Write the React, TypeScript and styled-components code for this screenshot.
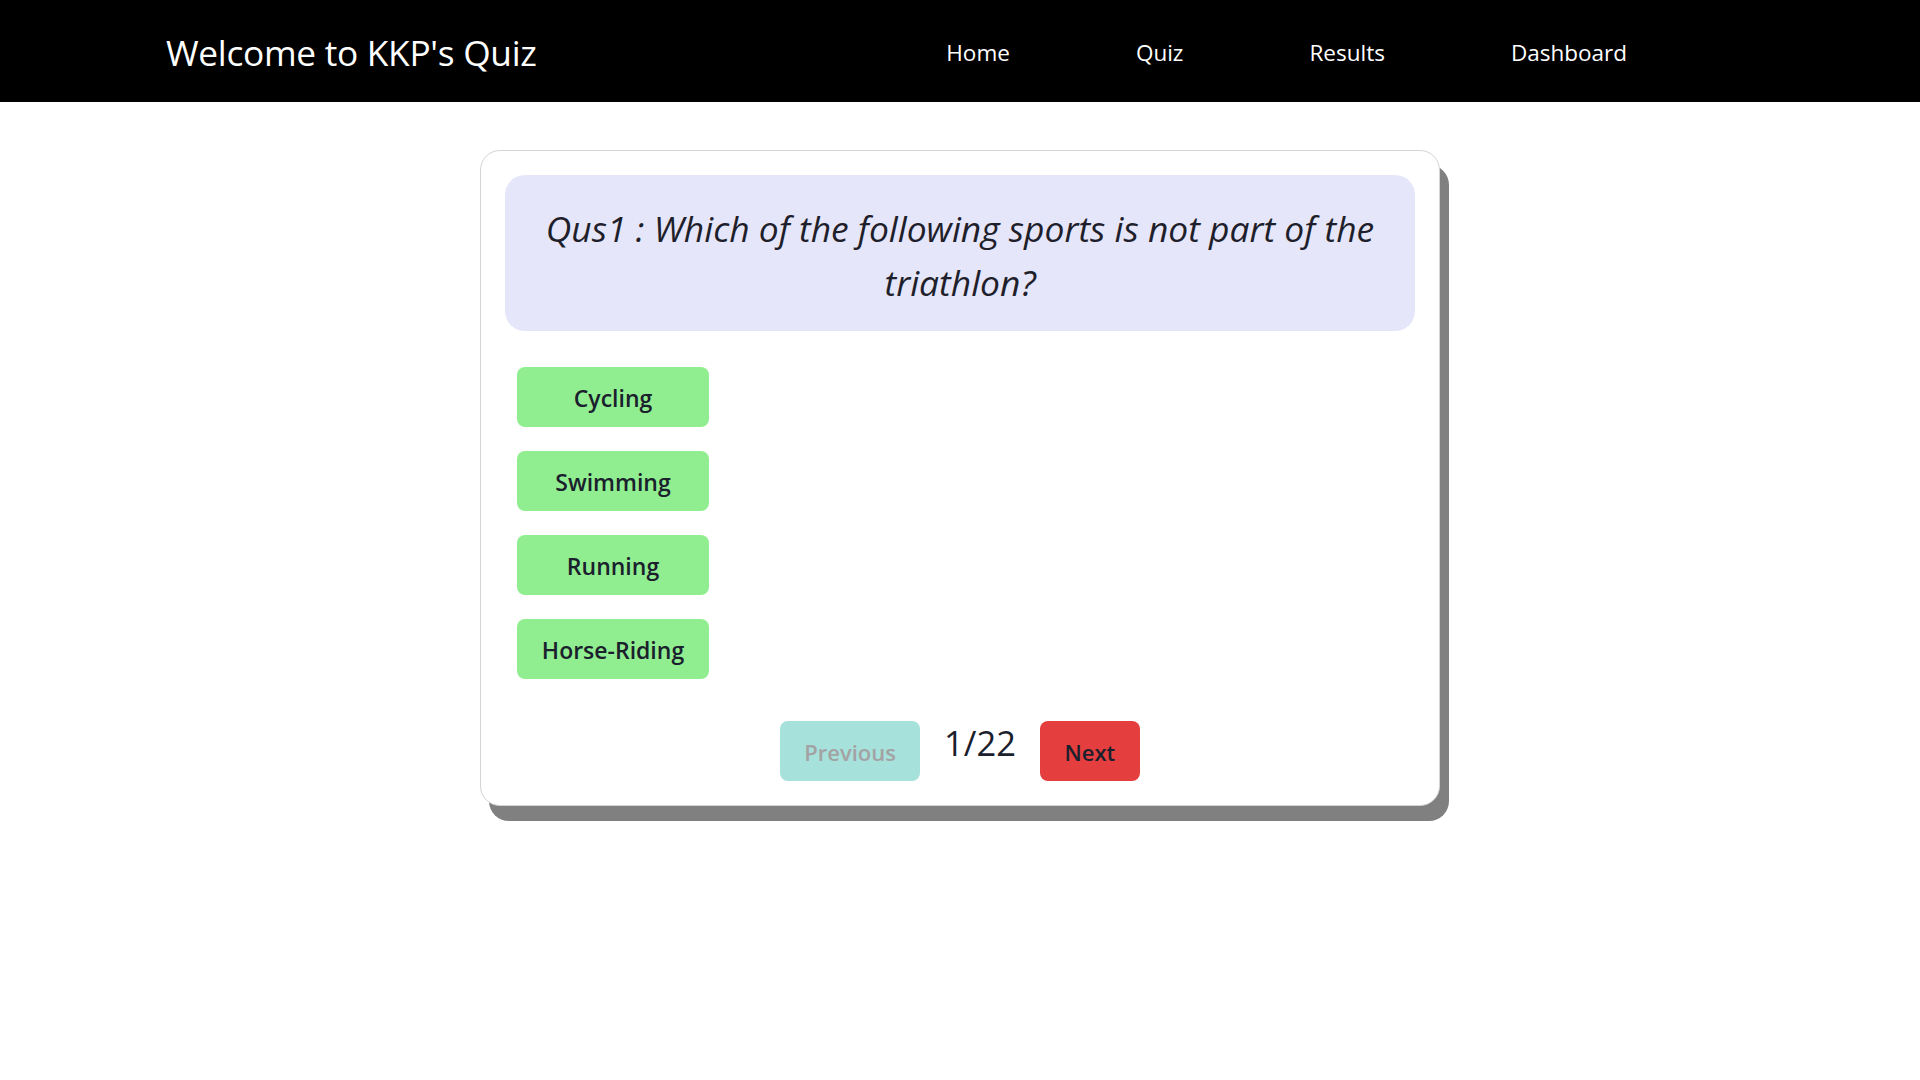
import React from "react";
import styled, { createGlobalStyle } from "styled-components";

const Global = createGlobalStyle`
  html, body { margin: 0; padding: 0; background: #ffffff; }
  body { font-family: "Open Sans", "Noto Sans", sans-serif; color: #1a202c; }
  * { box-sizing: border-box; }
`;

const Header = styled.header`
  height: 102px;
  background: #000000;
  display: flex;
  align-items: center;
  justify-content: space-between;
  padding: 2px 293px 0 166px;
`;

const Title = styled.h1`
  margin: 0;
  font-size: 35.3px;
  font-weight: 400;
  color: #ffffff;
  letter-spacing: -0.3px;
`;

const Nav = styled.nav`
  display: flex;
  align-items: center;
  gap: 126px;
`;

const NavLink = styled.a`
  color: #ffffff;
  font-size: 22.5px;
  text-decoration: none;
  cursor: pointer;
`;

const Main = styled.main`
  display: flex;
  justify-content: center;
  padding: 48px 0 60px;
`;

const Card = styled.section`
  width: 960px;
  background: #ffffff;
  border: 1px solid #d4d4d4;
  border-radius: 20px;
  box-shadow: 9px 15px 0 #808080;
  padding: 24px;
  display: flex;
  flex-direction: column;
`;

const Question = styled.div`
  background: #e6e6fa;
  border-radius: 20px;
  padding: 26px 26px 22px;
  text-align: center;
  font-style: italic;
  font-size: 35.4px;
  line-height: 54px;
  color: #1f1f2b;
`;

const Options = styled.div`
  display: flex;
  flex-direction: column;
  align-items: flex-start;
  gap: 24px;
  margin: 36px 0 0 12px;
`;

const OptionButton = styled.button`
  width: 192px;
  height: 60px;
  border: none;
  border-radius: 8px;
  background: #90ee90;
  color: #1a202c;
  font-family: "Open Sans", "Noto Sans", sans-serif;
  font-size: 23px;
  font-weight: 600;
  padding-top: 2px;
  cursor: pointer;
`;

const Pager = styled.div`
  display: flex;
  justify-content: center;
  align-items: flex-start;
  gap: 24px;
  margin-top: 42px;
`;

const PagerButton = styled.button<{ $variant: "prev" | "next" }>`
  height: 60px;
  width: ${(p) => (p.$variant === "prev" ? "140px" : "100px")};
  border: none;
  border-radius: 8px;
  background: ${(p) => (p.$variant === "prev" ? "#a7e1dc" : "#e53e3e")};
  color: ${(p) => (p.$variant === "prev" ? "#a3a3a3" : "#1a202c")};
  font-family: "Open Sans", "Noto Sans", sans-serif;
  font-size: 22px;
  font-weight: 600;
  padding-top: 2px;
  cursor: ${(p) => (p.$variant === "prev" ? "not-allowed" : "pointer")};
`;

const Counter = styled.span`
  font-size: 34.5px;
  line-height: 44px;
  color: #1a202c;
`;

const options = ["Cycling", "Swimming", "Running", "Horse-Riding"];

export default function App() {
  return (
    <>
      <Global />
      <Header>
        <Title>Welcome to KKP's Quiz</Title>
        <Nav>
          <NavLink>Home</NavLink>
          <NavLink>Quiz</NavLink>
          <NavLink>Results</NavLink>
          <NavLink>Dashboard</NavLink>
        </Nav>
      </Header>
      <Main>
        <Card>
          <Question>
            Qus1 : Which of the following sports is not part of the triathlon?
          </Question>
          <Options>
            {options.map((o) => (
              <OptionButton key={o}>{o}</OptionButton>
            ))}
          </Options>
          <Pager>
            <PagerButton $variant="prev" disabled>
              Previous
            </PagerButton>
            <Counter>1/22</Counter>
            <PagerButton $variant="next">Next</PagerButton>
          </Pager>
        </Card>
      </Main>
    </>
  );
}
